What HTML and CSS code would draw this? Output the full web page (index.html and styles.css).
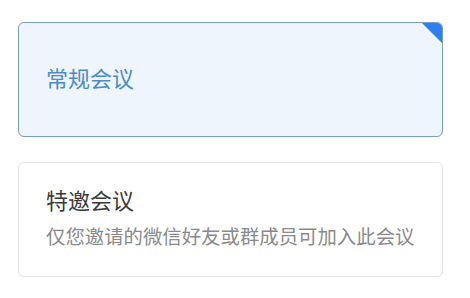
FILE: index.html
```html
<!DOCTYPE html>
<html lang="zh-CN">
<head>
<meta charset="UTF-8">
<meta name="viewport" content="width=device-width, initial-scale=1.0">
<title>会议类型</title>
<link rel="stylesheet" href="styles.css">
</head>
<body>
<div class="type-list">
    <div class="type-card selected">
        <div class="type-name">常规会议</div>
        <span class="corner"></span>
    </div>
    <div class="type-card">
        <div class="type-name">特邀会议</div>
        <div class="type-desc">仅您邀请的微信好友或群成员可加入此会议</div>
    </div>
</div>
</body>
</html>
```

FILE: styles.css
```css
* {
    box-sizing: border-box;
    font-family: "Noto Sans CJK SC", "Noto Sans", sans-serif;
}
body {
    margin: 0;
    background: #ffffff;
}
.type-list {
    display: flex;
    flex-direction: column;
    gap: 25px;
    padding: 22px 27px 0 18px;
}
.type-card {
    position: relative;
    overflow: hidden;
    height: 115px;
    display: flex;
    flex-direction: column;
    justify-content: center;
    padding: 0 27px 6px 27px;
    border: 1px solid #e4e4e4;
    border-radius: 6px;
    background: #ffffff;
    box-shadow: 0 1px 2px rgba(0, 0, 0, 0.04);
}
.type-card.selected {
    border-color: #7a9fbe;
    background: #eef5fd;
}
.type-name {
    font-size: 22px;
    line-height: 28px;
    color: #3a3a3a;
}
.selected .type-name {
    color: #4a8bca;
}
.type-desc {
    margin-top: 10px;
    font-size: 19.4px;
    line-height: 26px;
    color: #8a8a8a;
}
.corner {
    position: absolute;
    top: 0;
    right: 0;
    width: 0;
    height: 0;
    border-top: 20px solid #2d80f1;
    border-left: 20px solid transparent;
}
```
